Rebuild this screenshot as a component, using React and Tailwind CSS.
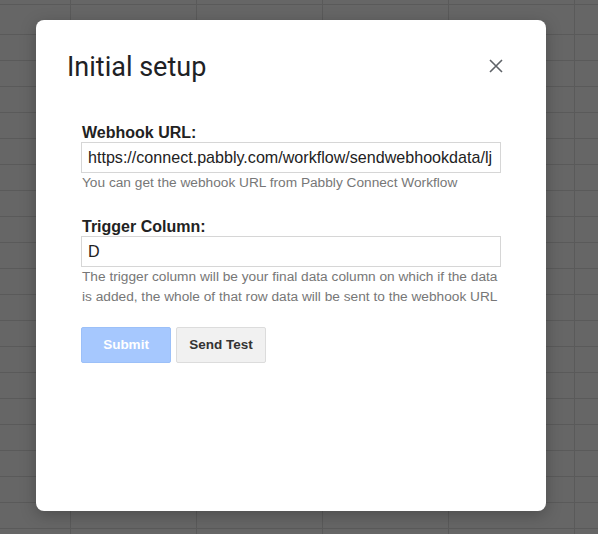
import React from "react";

const ROWS = [5, 30, ...Array(20).fill(26)];
const COLS = [71, 126, 126, 126, 126, 126];

export default function App() {
  return (
    <div className="relative w-[598px] h-[534px] overflow-hidden bg-[#666666] font-['Liberation_Sans',Arial,sans-serif]">
      <div className="absolute inset-0 flex flex-col">
        {ROWS.map((h, r) => (
          <div key={r} className="flex shrink-0" style={{ height: h }}>
            {COLS.map((w, c) => (
              <div
                key={c}
                className="shrink-0 border-r border-b border-[#5a5a5a]"
                style={{ width: w }}
              />
            ))}
          </div>
        ))}
      </div>

      <div className="absolute left-[36px] top-[20px] w-[510px] h-[491px] bg-white rounded-[8px] shadow-[0_4px_16px_rgba(0,0,0,0.25)] flex flex-col">
        <div className="flex justify-between pt-[31px] pl-[31px] pr-[43px]">
          <h1 className="font-['Roboto',sans-serif] text-[27px] leading-[32px] text-[#202124] font-normal">
            Initial setup
          </h1>
          <button className="mt-[8px] w-[14px] h-[14px] self-start">
            <svg width="14" height="14" viewBox="0 0 14 14" fill="none">
              <path d="M1 1L13 13M13 1L1 13" stroke="#5f6368" strokeWidth="1.6" />
            </svg>
          </button>
        </div>

        <div className="px-[45px] mt-[41px] flex flex-col">
          <label className="text-[16px] leading-[18px] font-bold text-[#222222] pl-[1px]">
            Webhook URL:
          </label>
          <input
            readOnly
            value="https://connect.pabbly.com/workflow/sendwebhookdata/lj"
            className="w-[420px] h-[31px] border border-[#d6d6d6] pl-[6px] pr-[1px] text-[16.1px] text-[#222222] outline-none bg-white font-['Liberation_Sans',Arial,sans-serif]"
          />
          <p className="text-[13.7px] leading-[20px] text-[#777777] pl-[1px]">
            You can get the webhook URL from Pabbly Connect Workflow
          </p>

          <label className="mt-[25px] text-[16px] leading-[18px] font-bold text-[#222222] pl-[1px]">
            Trigger Column:
          </label>
          <input
            readOnly
            value="D"
            className="w-[420px] h-[31px] border border-[#d6d6d6] pl-[6px] pr-[1px] text-[16.1px] text-[#222222] outline-none bg-white font-['Liberation_Sans',Arial,sans-serif]"
          />
          <p className="text-[13.7px] leading-[20px] text-[#777777] pl-[1px] whitespace-nowrap">
            The trigger column will be your final data column on which if the data
            <br />
            is added, the whole of that row data will be sent to the webhook URL
          </p>

          <div className="mt-[20px] flex gap-[5px]">
            <button className="w-[90px] h-[36px] rounded-[2px] bg-[#a6c8fe] border border-[#9cc0f8] text-white text-[13.5px] font-bold">
              Submit
            </button>
            <button className="w-[90px] h-[36px] rounded-[2px] bg-[#f1f1f1] border border-[#dcdcdc] text-[#333333] text-[13.5px] font-bold">
              Send Test
            </button>
          </div>
        </div>
      </div>
    </div>
  );
}
